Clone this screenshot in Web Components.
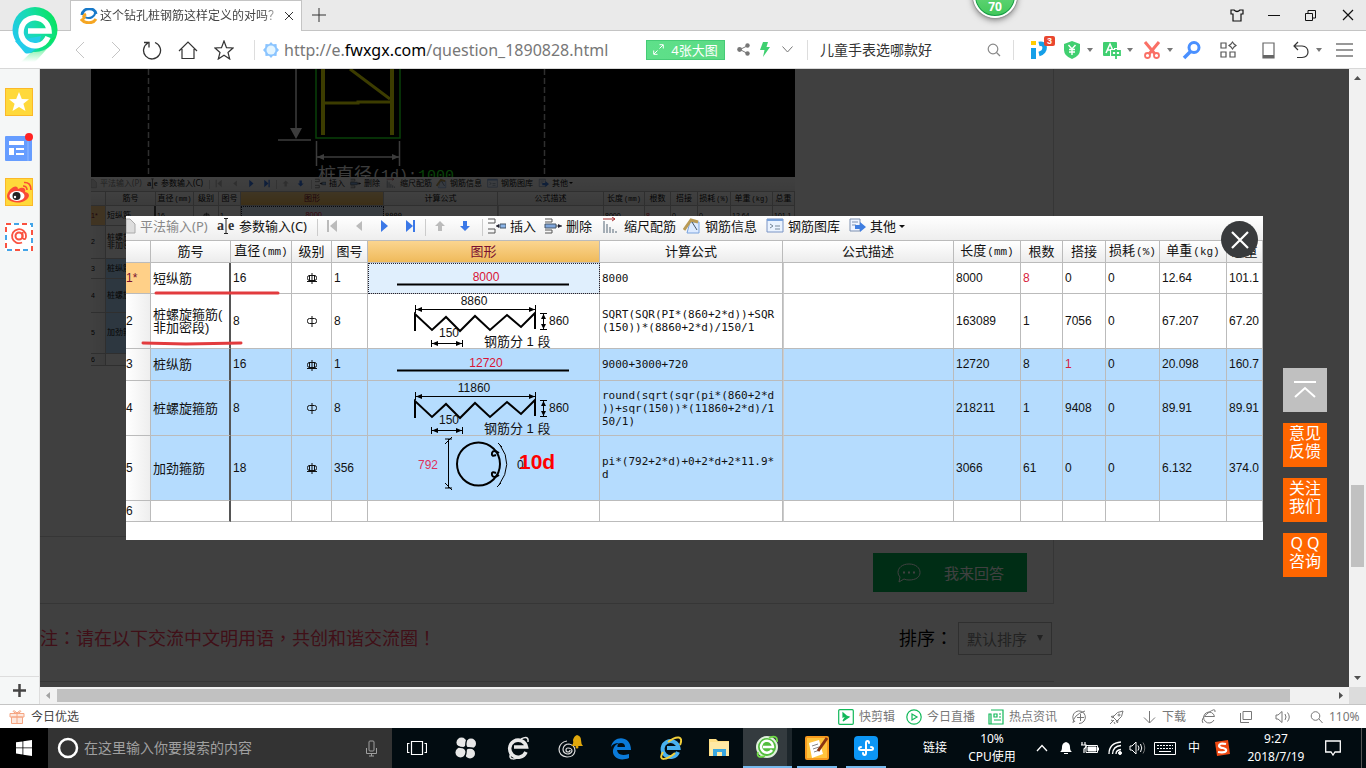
<!DOCTYPE html>
<html lang="zh-CN">
<head>
<meta charset="utf-8">
<title>这个钻孔桩钢筋这样定义的对吗</title>
<style>
html,body{margin:0;height:100%}
body{font:12px/16px "Noto Sans","Noto Sans CJK SC",sans-serif;color:#333;overflow:hidden}
</style>
</head>
<body>
<browser-window></browser-window>
<script>
const define=(name,css,html)=>customElements.define(name,class extends HTMLElement{
  constructor(){
    super();
    const t=document.createElement('template');
    t.innerHTML=`<style>*{box-sizing:border-box}button{font:inherit;color:inherit;background:none;border:0;padding:0;margin:0;display:flex;align-items:center;justify-content:center;white-space:nowrap}svg{display:block;flex:none}input{font:inherit;color:inherit;border:0;background:none;padding:0;margin:0;min-width:0;outline:0}${css}</style>${typeof html==='function'?html(this):html}`;
    this.attachShadow({mode:'open'}).append(t.content.cloneNode(true));
  }
});
const svg=(w,h,body,attr='fill="none" stroke="currentColor"',vb)=>`<svg width="${w}" height="${h}" viewBox="${vb||`0 0 ${w} ${h}`}" ${attr} aria-hidden="true">${body}</svg>`;

define('tab-strip',`
:host{display:flex;height:31px;background:#eaeaea;border-bottom:1px solid #c4c4c4;padding-left:70px;position:relative;z-index:1}
.tab{display:flex;align-items:center;width:232px;height:31px;background:#fff;border:1px solid #c4c4c4;border-bottom:0;padding:0 7px 0 9px}
.name{flex:1;margin:0 6px 0 2px;white-space:nowrap;overflow:hidden;color:#444;-webkit-mask:linear-gradient(90deg,#000 164px,transparent 182px)}
.plus{width:33px}
.win{display:flex;margin-left:auto}
.win button{width:37px;color:#111}
.ball{position:absolute;left:973px;top:-26px;width:44px;height:44px;border-radius:50%;background:linear-gradient(#7ee08c,#41c85a);border:2px solid #fff;box-shadow:0 0 0 1px #999,0 2px 6px #777,inset 0 0 0 1px #189a4a;color:#fff;font-weight:700;line-height:14px;display:flex;align-items:flex-end;justify-content:center;padding-bottom:2px}
.logo{position:absolute;left:11px;top:6px}
`,`
<span class="logo">${svg(48,57,`<defs><linearGradient id="a" x1="0" y1=".7" x2="1" y2=".3"><stop offset="0" stop-color="#22c8ef"/><stop offset=".5" stop-color="#17dcae"/><stop offset="1" stop-color="#06e45c"/></linearGradient><linearGradient id="b" x1="0" y1="0" x2="0" y2="1"><stop offset="0" stop-color="#07e45d"/><stop offset="1" stop-color="#07e45d" stop-opacity="0"/></linearGradient></defs><circle cx="24" cy="23.500" r="22.500" fill="url(#a)"/><path d="M4 35L14 47Q18 49 26 44L30 30Z" fill="#23cdea"/><path d="M45 30Q42 37 24 56H10Q20 46 30 38Z" fill="url(#b)"/><path d="M37 31A14 14 0 1 1 38 25H17" fill="none" stroke="#fff" stroke-width="5.500"/>`,'')}</span>
<div class="tab">
${svg(18,16,`<path d="M2 7C3-1 15-1 16 6" stroke="#1879c9" stroke-width="3"/><path d="M5 9C10 12 15 8 15 5" stroke="#1879c9" stroke-width="2"/><path d="M1 11C5 16 13 16 16 11M5 11Q2 8 6 6" stroke="#f5a623" stroke-width="3"/>`)}
<span class="name">这个钻孔桩钢筋这样定义的对吗？</span>
<button aria-label="关闭标签页">${svg(10,10,'<path d="M1 1L9 9M9 1L1 9"/>')}</button></div>
<button class="plus" aria-label="新建标签页">${svg(14,14,'<path d="M7 0V14M0 7H14"/>')}</button>
<div class="win">
<button aria-label="皮肤">${svg(14,13,'<path d="M4 1H1V5H3V12H11V5H13V1H10Q7 4 4 1Z" stroke-width="1.200"/>')}</button>
<button aria-label="最小化">${svg(12,12,'<path d="M0 6.500H12"/>')}</button>
<button aria-label="还原">${svg(11,11,'<path d="M.5 3.500H7.500V10.500H.5ZM3 3V.5H10.500V8H8"/>')}</button>
<button aria-label="关闭">${svg(12,12,'<path d="M1 1L11 11M11 1L1 11" stroke-width="1.200"/>')}</button></div>
<div class="ball">70</div>`);

const caret=svg(6,4,'<path d="M0 0H6L3 4Z" fill="#777"/>','');
define('tool-bar',`
:host{display:flex;align-items:center;height:38px;background:#fff;border-bottom:1px solid #d8d8d8;padding-left:62px}
.nav{display:flex;color:#333}.nav button{width:36px;height:36px}.off{color:#c4c4c4}
i{width:1px;height:20px;background:#ddd}
.addr{flex:1;display:flex;align-items:center;margin:0 0 0 12px;min-width:0}
.addr svg{margin:0 5px 0 8px}
.url{flex:1;font-size:16px;line-height:22px;color:#777;white-space:nowrap;overflow:hidden;text-decoration:none}.url b{font-weight:400;color:#000}
.pics{width:79px;height:20px;background:linear-gradient(90deg,#5ee08a,#5cdb85);border:1px solid #45cb76;color:#fff;font-size:13px;gap:7px;margin-right:7px}
.acts{display:flex;margin-right:9px}.acts button{width:22px;color:#777}
.find{display:flex;align-items:center;width:205px;padding:0 12px 0 12px;font-size:14px}.find input{flex:1}
.tools{display:grid;grid-template-columns:35px 40px 40px 40px 36px 40px 34px 44px 30px;padding-left:13px}
.tools button{justify-content:flex-start;gap:5px;position:relative;height:30px}
.n{position:absolute;left:17px;top:1px;width:11px;height:10px;background:#e9472f;border-radius:2px;color:#fff;font:700 9px/10px "Liberation Sans",sans-serif}
`,`
<div class="nav">
<button class="off" aria-label="后退">${svg(10,18,'<path d="M9 1L1 9L9 17"/>')}</button>
<button class="off" aria-label="前进">${svg(10,18,'<path d="M1 1L9 9L1 17"/>')}</button>
<button aria-label="刷新">${svg(20,20,'<path d="M6 3A8.500 8.500 0 1 0 13 2.500M2 2.500H7V7.500" stroke-width="1.300"/>')}</button>
<button aria-label="主页">${svg(20,20,'<path d="M1 11L10 2L19 11M4 9V18.500H16V9" stroke-width="1.200"/>')}</button>
<button aria-label="收藏">${svg(20,20,'<path d="M10 1L12.500 7.700L19 8L14 12.500L15.700 19L10 15.300L4.300 19L6 12.500L1 8L7.500 7.700Z" stroke-width="1.200"/>')}</button></div>
<div class="addr"><i></i>
${svg(16,16,'<path d="M8 0L10 2.200L13.500 2L13.800 5.500L16 8L13.800 10.500L13.500 14L10 13.800L8 16L6 13.800L2.500 14L2.200 10.500L0 8L2.200 5.500L2.500 2L6 2.200Z" fill="#8ac4ff"/><circle cx="8" cy="8" r="4.500" fill="#e4f5ff"/>','')}
<a class="url" href="http://e.fwxgx.com/question_1890828.html">http://e.<b>fwxgx.com</b>/question_1890828.html</a></div>
<button class="pics">${svg(11,11,'<path d="M6.500 .7H10.300V4.500M10 1L6.500 4.500M.7 6.500V10.300H4.500M1 10L4.500 6.500"/>')}4张大图</button>
<div class="acts">
<button aria-label="分享">${svg(13,13,'<path d="M11 2.500L3 6.500L10.500 10.500" stroke="#777"/><g fill="#777"><circle cx="10.500" cy="2.500" r="2.200"/><circle cx="2.600" cy="6.500" r="2.400"/><circle cx="10.500" cy="10.500" r="2.200"/></g>','fill="none"')}</button>
<button aria-label="极速模式">${svg(10,15,'<path d="M3 0H8L6.500 5H10L3 15L4.500 8H0Z" fill="#3fd070"/>','')}</button>
<button aria-label="更多">${svg(11,7,'<path d="M.5 .5L5.500 6L10.500 .5"/>')}</button></div>
<i></i>
<label class="find"><input aria-label="搜索" value="儿童手表选哪款好">${svg(14,14,'<circle cx="6" cy="6" r="4.800"/><path d="M9.500 9.500L13 13"/>','fill="none" stroke="#888" stroke-width="1.200"')}</label>
<i></i>
<div class="tools">
<button aria-label="比价">${svg(24,20,'<rect x="4" y="1" width="5" height="4" fill="#fc0"/><path d="M4 8H9V19H4Z" fill="#159fe8"/><path d="M12 4C19 2 20 12 12 14" fill="none" stroke="#159fe8" stroke-width="4.500"/>','')}<span class="n">3</span></button>
<button aria-label="网购先赔">${svg(20,20,'<path d="M10 1L18 4V10Q18 16 10 19Q2 16 2 10V4Z" fill="#40cf70"/><path d="M6.500 5L10 9L13.500 5M10 9V15M7 9.500H13M7 12H13" stroke="#fff" stroke-width="1.400" fill="none"/>','')}${caret}</button>
<button aria-label="翻译">${svg(20,20,'<rect x="1" y="2" width="14" height="14" rx="1" fill="#40cf70"/><path d="M4 13L8 4L12 13M5.500 10H10" stroke="#fff" stroke-width="1.500" fill="none"/><path d="M14 8V19M10 11H18V15H10Z" stroke="#fff" stroke-width="4" fill="none"/><path d="M14 9V19M10 11H18V15H10Z" stroke="#40cf70" stroke-width="1.800" fill="none"/>','')}${caret}</button>
<button aria-label="截图">${svg(20,20,'<path d="M3 2L13 14M17 2L7 14" stroke-width="3"/><circle cx="5.500" cy="15.500" r="2.500" stroke-width="1.800"/><circle cx="14.500" cy="15.500" r="2.500" stroke-width="1.800"/>','fill="none" stroke="#fa7066"')}${caret}</button>
<button aria-label="登录管家">${svg(20,20,'<circle cx="12" cy="7.500" r="5" stroke-width="3"/><path d="M8.500 11.500L2 18" stroke-width="3.500"/>','fill="none" stroke="#4a90ff"')}</button>
<button aria-label="扩展">${svg(20,20,'<path d="M3 3H8V8H3ZM3 12H8V17H3ZM12 12H17V17H12ZM14.500 2L16 4L18 5.500L16 7L14.500 9L13 7L11 5.500L13 4Z"/>','fill="none" stroke="#555" stroke-width="1.200"')}</button>
<button aria-label="手机">${svg(20,20,'<path d="M5 3H16V18H5Z"/><path d="M5 16.500H16" stroke-width="3"/>','fill="none" stroke="#666" stroke-width="1.200"')}</button>
<button aria-label="恢复">${svg(19,20,'<path d="M6 2L2 6L6 10M2 6H10Q16 6.500 16 12Q16 17 10 17.500H5" stroke-width="1.200"/>')}${caret}</button>
<button aria-label="菜单">${svg(17,14,'<path d="M0 1H17M0 7H17M0 13H17" stroke="#333" stroke-width="1.200"/>')}</button></div>`);

define('side-rail',`
:host{display:flex;flex-direction:column;width:40px;background:#f5f7f7;border-right:1px solid #ddd;padding-top:19px}
.i{display:flex;flex-direction:column;gap:17px;padding-left:5px}.i button{width:28px;height:28px}
.add{margin-top:auto;height:28px;border-top:1px solid #ddd;color:#444}
`,`<div class="i">
<button aria-label="收藏夹">${svg(28,28,'<rect x=".5" y=".5" width="27" height="27" fill="#ffd93b" stroke="#fbb829"/><path d="M14 4L16.800 11L24 11.300L18.400 15.800L20.500 23L14 19L7.500 23L9.600 15.800L4 11.300L11.200 11Z" fill="#fff"/>','')}</button>
<button aria-label="资讯">${svg(30,28,'<rect x="1" y="3" width="27" height="25" rx="1" fill="#669dff"/><path d="M24 3V28" stroke="#8eb8ff"/><g fill="#fff"><path d="M5 8H20V12H5ZM5 15H10V22H5ZM12 15H20V17H12ZM12 20H20V22H12Z"/></g><circle cx="25" cy="4" r="4" fill="#ff2323"/>','')}</button>
<button aria-label="微博">${svg(28,28,'<rect x=".5" y=".5" width="27" height="27" fill="#ffd93b" stroke="#fbb829"/><path d="M2 18C3 11 12 5 13 11C19 8 21 11 20 14C29 16 21 25 12 24.500C6 24 2 22 2 18Z" fill="#fa4b36"/><ellipse cx="12" cy="18" rx="7.500" ry="5" fill="#fff"/><circle cx="11.500" cy="18" r="4" fill="#222"/><circle cx="10" cy="19" r="1.200" fill="#fff"/><path d="M18 8Q22 8 22 12M19 4.500Q26 4 26 12" stroke="#fa4b36" stroke-width="1.600" fill="none"/>','')}</button>
<button aria-label="邮箱">${svg(28,28,'<rect width="28" height="28" fill="#fff"/><rect x="1" y="1" width="26" height="26" fill="none" stroke="#fa5240" stroke-width="2" stroke-dasharray="5 11"/><rect x="1" y="1" width="26" height="26" fill="none" stroke="#44a5e8" stroke-width="2" stroke-dasharray="5 11" stroke-dashoffset="8"/><circle cx="14" cy="13" r="3.500" fill="none" stroke="#fa5240" stroke-width="2"/><path d="M17.500 9V15Q21 18 21 13A7 7 0 1 0 17 19.500" fill="none" stroke="#fa5240" stroke-width="1.800"/>','')}</button></div>
<button class="add" aria-label="添加">${svg(13,13,'<path d="M6.500 0V13M0 6.500H13" stroke-width="2.500"/>')}</button>`);

define('cad-drawing',`:host{display:block;background:#000;height:108px;overflow:hidden}text{font:15px "Liberation Mono","Noto Sans CJK SC",monospace}.z{font-size:18px}`,
svg(704,108,`<g stroke="#ccc"><path d="M57.500 0V108M453.500 0V108" stroke-dasharray="6 3" stroke-width="1.500" stroke="#bbb"/><path d="M205 0V60M187 71H220M225.500 72V97M308.500 72V97M226 88H308" stroke="#eee" stroke-width="1.500"/></g><path d="M199 59H211L205 70ZM226 88L233 85V91ZM308 88L301 85V91Z" fill="#eee"/><g stroke="#ee0" stroke-width="4"><path d="M232 0V66M301 0V66" /><path d="M259 0L299 30M234 34H267V33H299" stroke-width="3"/></g><path d="M225 0V69H309V0" stroke="#2f2" stroke-width="1.500"/><text class="z" x="227" y="112" fill="#eee">桩直径</text><text x="281" y="111" fill="#eee">(1d):</text><text x="327" y="111" fill="#2f2">1000</text>`,'fill="none"'));

/* 钢筋表 */
const T='font-family="Liberation Sans,Noto Sans CJK SC,sans-serif" font-size="12" fill="#111"';
const bar=(n,h)=>`<svg class="g" viewBox="0 0 176 ${h}"><text x="90" y="18" text-anchor="middle" ${T} style="fill:#d81536">${n}</text><path d="M1 21.500H173" stroke="#000" stroke-width="2"/></svg>`;
const spiral=n=>`<svg class="g" viewBox="0 0 176 55" fill="none" stroke="#000"><path d="M19 37V20L36 36L50 23L64 37L79 22L94 36L111 21L125 33L139 19V35" stroke-width="2"/><path d="M20 15.500H139M19.500 11V19M139.500 11V19M35 49.500H66M35.500 46V53M66.500 46V53M147.500 20V35M144 19.500H151M144 35.500H151"/><path d="M20 15.500L26 13V18ZM139 15.500L133 13V18ZM36 49.500L42 47V52ZM66 49.500L60 47V52ZM147.500 20L145 25H150ZM147.500 35L145 30H150Z" fill="#000" stroke="none"/><g stroke="none" ${T}><text x="78" y="11" text-anchor="middle">${n}</text><text x="43" y="43">150</text><text x="153" y="31">860</text><text x="88" y="52" font-size="13">钢筋分 1 段</text></g></svg>`;
const ring=`<svg class="g" viewBox="0 0 176 65" fill="none" stroke="#000"><circle cx="82.500" cy="28" r="21.500" stroke-width="2"/><path d="M52.500 3V52M49 3H56M49 8L56 1M49 52H56M49 47L56 54M102 7L106 11M101 51L105 47"/><path d="M104 9Q118 28 103 49" /><path d="M103 17Q97 13 96 17T100 19M103 39Q97 43 96 39T100 37" stroke-width="2"/><text x="22" y="33" ${T} stroke="none" style="fill:#e0305c">792</text><text x="121" y="33" ${T} stroke="none">0</text><text x="123" y="33" font-family="Liberation Sans,sans-serif" font-weight="700" font-size="21" fill="#f00" stroke="none">10d</text></svg>`;
const lv=two=>`<svg class="lv" viewBox="0 0 12 12" fill="none" stroke="#111" role="img" aria-label="钢筋级别"><path d="M6 1V12"/><rect x="1.500" y="3.500" width="9" height="5" rx="2"/>${two?'<path d="M3.500 3V9M8.500 3V9M1 9.500H11"/>':''}</svg>`;
const heads=['','筋号','直径<s>(mm)</s>','级别','图号','图形','计算公式','公式描述','长度<s>(mm)</s>','根数','搭接','损耗<s>(%)</s>','单重<s>(kg)</s>','总重'];
const rows=[
['1*','短纵筋','16',lv(1),'1',bar(8000,31),'8000','','8000','<em>8</em>','0','0','12.64','101.1'],
['2','桩螺旋箍筋(<br>非加密段)','8',lv(0),'8',spiral(8860),'SQRT(SQR(PI*(860+2*d))+SQR<br>(150))*(8860+2*d)/150/1','','163089','1','7056','0','67.207','67.20'],
['3','桩纵筋','16',lv(1),'1',bar(12720,32),'9000+3000+720','','12720','8','<em>1</em>','0','20.098','160.7'],
['4','桩螺旋箍筋','8',lv(0),'8',spiral(11860),'round(sqrt(sqr(pi*(860+2*d<br>))+sqr(150))*(11860+2*d)/1<br>50/1)','','218211','1','9408','0','89.91','89.91'],
['5','加劲箍筋','18',lv(1),'356',ring,'pi*(792+2*d)+0+2*d+2*11.9*<br>d','','3066','61','0','0','6.132','374.0'],
['6','','','','','','','','','','','','','']];
const ti=(b,vb='0 0 18 18')=>`<svg class="ti" viewBox="${vb}" fill="none">${b}</svg>`;
const blue='#3b78e7',grey='#bbb';
const tools=[
['平法输入(P)','<svg class="ti half" viewBox="0 0 10 18"><path d="M0 2H4L9 7V16H0Z" fill="#ddd" stroke="#aaa"/></svg>','dis'],
['参数输入(C)',ti('<text x="0" y="13" font-family="Liberation Serif" font-weight="700" font-size="14" fill="#333">a</text><text x="11" y="13" font-family="Liberation Serif" font-weight="700" font-size="14" fill="#333">e</text><path d="M9 2V16M7 1.500H11M7 16.500H11" stroke="#222"/>')],
'|',
['',ti(`<path d="M2 3V15" stroke="${grey}" stroke-width="2"/><path d="M11 3V15L4 9Z" fill="${grey}"/>`),'','第一条'],
['',ti(`<path d="M8 4V14L2 9Z" fill="${grey}"/>`),'','上一条'],
['',ti(`<path d="M2 3V15L9 9Z" fill="${blue}"/>`),'','下一条'],
['',ti(`<path d="M2 3V15L9 9Z" fill="${blue}"/><path d="M10 3V15" stroke="${blue}" stroke-width="2"/>`),'','最后一条'],
'|',
['',ti(`<path d="M6 4L11 9H8V14H4V9H1Z" fill="${grey}"/>`),'','上移'],
['',ti(`<path d="M6 14L11 9H8V4H4V9H1Z" fill="${blue}"/>`),'','下移'],
'|',
['插入',ti('<path d="M0 2H7V6H0M0 12H7V16H0M8 9H12" stroke="#555"/><path d="M12 7H18V11H12Z" fill="#8ab4e8" stroke="#456"/><path d="M8 9L11 7V11Z" fill="#223"/>')],
['删除',ti('<path d="M1 2H8V5H1M1 13H8V16H1M11 9H18" stroke="#555"/><path d="M1 7H12V11H1Z" fill="#7fa6dc" stroke="#456"/><path d="M18 9L14 7V11Z" fill="#223"/>')],
['缩尺配筋',ti('<path d="M1 2H13M10 0L13 2L10 4" stroke="#a33"/><path d="M2 4V16M5 7V16M8 10V16M11 12V16M14 14V16" stroke="#567"/>')],
['钢筋信息',ti('<path d="M7 5H16V16H4Z" fill="#dceaff" stroke="#7aa3dc"/><path d="M1 13L8 3L15 5" stroke="#b99a55" stroke-width="3"/><path d="M9 5L14 13" stroke="#456"/>')],
['钢筋图库',ti('<path d="M1 2H17V15H1Z" fill="#eaf3ff" stroke="#7a94c4"/><path d="M1 3H17" stroke="#7aa3dc" stroke-width="2"/><path d="M4 7L7 9L4 11M9 9H14M9 12H14" stroke="#789"/>')],
['其他<u></u>',ti('<path d="M2 2H12V14H2Z" fill="#eef4ff" stroke="#7d90b0"/><path d="M4 5H10M4 8H8" stroke="#7d90b0"/><path d="M7 8H12V5L18 10L12 15V12H7Z" fill="#3f7de0"/>')]];
define('rebar-sheet',`
:host{display:block;background:#fff;overflow:hidden;color:#111;--fs:13px;--num:12px;--mono:11px;--lh:13px;--pad:2px;--ic:18px;--gap:4px;--g:176px;--lv:12px}
:host([compact]){--fs:8px;--num:7px;--mono:7px;--lh:8px;--pad:1px;--ic:11px;--gap:3px;--g:109px;--lv:7px}
.bar{display:grid;grid-template-columns:91px 100px 9px 28px 25px 25px 21px 9px 25px 23px 6px 56px 58px 81px 83px 82px 1fr;height:25px;padding-bottom:4px;background:linear-gradient(#fff,#eee);border-bottom:1px solid #bbb;font-size:var(--fs)}
:host([compact]) .bar{grid-template-columns:56px 62px 6px 17px 16px 15px 13px 6px 15px 14px 4px 35px 36px 50px 51px 51px 1fr;height:15px;padding-bottom:2px}
.bar button{justify-content:flex-start;gap:var(--gap);height:100%;line-height:var(--lh)}
.bar i{width:1px;background:#ccc;margin:3px 0 0}.dis{color:#888}
.ti{width:var(--ic);height:var(--ic)}.half{width:10px}:host([compact]) .half{width:6px}
u{display:inline-block;border:3px solid transparent;border-top-color:#111;border-bottom:0;margin:0 0 3px 3px}:host([compact]) u{border-width:2px 2px 0;margin:0 0 2px 1px}
table{table-layout:fixed;width:100%;border-collapse:separate;border-spacing:0;font:var(--num)/var(--lh) "Liberation Sans","Noto Sans CJK SC",sans-serif}
th,td{padding:0 0 0 var(--pad);border:solid #bbb;border-width:0 1px 1px 0;text-align:left;white-space:nowrap;overflow:hidden;font-weight:400}
thead th{background:linear-gradient(#fff,#ececec);text-align:center;font-size:var(--fs);padding:0}
s,.f{font-family:"DejaVu Sans Mono",monospace;font-size:var(--mono)}
s{text-decoration:none;font-family:"Liberation Mono",monospace;margin-left:1px}
tbody th{background:linear-gradient(90deg,#fff,#eee);padding:0}
tbody tr:first-child th{background:#ffd088;color:#7a1030}
.n{font-size:var(--fs);border-right:2px solid #555}.c{text-align:center;padding:0}.lv{width:var(--lv);height:var(--lv);margin:0 auto}
.g{width:var(--g);margin:0 auto -1px}
.d{border-left:1px solid #ccc}
.blue td{background:#b5dcfe}
thead .sel{background:linear-gradient(#fbd58f,#efba5b);color:#7a1030}
tr:first-child td.sel{background:#e0effd;box-shadow:none;outline:1px dotted #223;outline-offset:-1px}
em{font-style:normal;color:#d8203c}
.foot{height:18px}:host([compact]) .foot{height:1px}
`,el=>{
const k=el.hasAttribute('compact');
const w=k?[15,50,38,25,22,143,114,106,41,26,27,33,42,22]:[25,80,61,40,36,232,183,171,67,42,43,54,67,36];
const h=k?[14,20,33,20,34,41,12]:[22,31,55,32,55,65,21];
const cls=['','n','','c','','c sel','f','d'];
/* the compact sheet is a thumbnail: beyond the first record it lists only numbers and names */
const shown=(i,j)=>!k||i<1||j<2;
return `<div class="bar">${tools.map(t=>t==='|'?'<i></i>':`<button class="${t[2]||''}" ${t[3]?`aria-label="${t[3]}"`:''}>${t[1]}${t[0]?`<span>${t[0]}</span>`:''}</button>`).join('')}</div>
<table><colgroup>${w.map(x=>`<col style="width:${x}px">`).join('')}</colgroup>
<thead><tr style="height:${h[0]}px">${heads.map((x,i)=>`<th class="${i==5?'sel':''}">${x}</th>`).join('')}</tr></thead>
<tbody>${rows.map((r,i)=>`<tr style="height:${h[i+1]}px" class="${i>1&&i<5?'blue':''}">${r.map((x,j)=>j?`<td class="${cls[j]||''}">${shown(i,j)?x:''}</td>`:`<th scope="row">${x}</th>`).join('')}</tr>`).join('')}</tbody></table><div class="foot"></div>`;});

define('answer-page',`
:host{display:block;width:1014px;background:#fff}
.panel{border-right:1px solid #d8d8d8}
figure{margin:0;padding-left:51px;width:755px;height:467px}
.reply{border:solid #d8d8d8;border-width:1px 0;height:68px;display:flex;align-items:flex-start;justify-content:flex-end;padding:16px 26px 0 0}
.reply button{width:154px;height:39px;background:#00b455;color:#fff;font-size:15px;gap:22px}
.note{display:flex;align-items:center;height:78px;border-bottom:1px solid #d8d8d8;font-size:18px;line-height:24px;font-family:"Noto Sans CJK TC",sans-serif;padding:0 2px 8px 0}
p{margin:0;padding-bottom:4px;color:#ff4060;flex:1}
label{display:flex;align-items:center;color:#000;gap:5px}label>span:first-child{padding-bottom:4px}
.s{position:relative;display:block}
select{display:block;appearance:none;width:94px;height:33px;border:1px solid #bbb;background:#fff;color:#888;font:15px "Noto Sans CJK SC",sans-serif;padding:0 0 0 8px;border-radius:0}
.s::after{content:"";position:absolute;right:9px;top:13px;border:3px solid transparent;border-top:6px solid #888;border-bottom:0}
`,`<div class="panel"><figure><cad-drawing></cad-drawing><rebar-sheet compact></rebar-sheet></figure>
<div class="reply"><button>${svg(26,20,'<path d="M13 1C20 1 24 5 24 9.500S20 17 13 17Q10 17 8 16L3 19L4 14Q2 12 2 9.500C2 5 6 1 13 1Z"/><path d="M7 9.500H9M12 9.500H14M17 9.500H19" stroke-width="2"/>')}<span>我来回答</span></button></div></div>
<div class="note" lang="zh-TW"><p>注：请在以下交流中文明用语，共创和谐交流圈！</p><label><span>排序：</span><span class="s" lang="zh-CN"><select><option>默认排序</option></select></span></label></div>`);

define('image-lightbox',`
:host{position:absolute;inset:0;background:rgba(0,0,0,.75);display:flex;align-items:center;padding:0 86px}
.box{position:relative;flex:1;min-width:0}
.close{position:absolute;right:5px;top:5px;width:37px;height:37px;border-radius:50%;background:#393b3d;color:#fff}
.marks{position:absolute;left:0;top:0;pointer-events:none}
`,`<div class="box"><slot></slot>
<svg class="marks" width="200" height="140" fill="none" stroke="#e23b3e" stroke-width="3" stroke-linecap="round" aria-hidden="true"><path d="M30 77H152M17 127L60 128L115 127"/></svg>
<button class="close" aria-label="关闭图片">${svg(18,18,'<path d="M1 1L17 17M17 1L1 17" stroke-width="2.200"/>')}</button></div>`);

define('float-menu',`
:host{position:absolute;right:22px;top:299px;display:grid;gap:11px}
button{width:44px;height:44px;background:#f60;color:#fff;font-size:16px;line-height:18px;white-space:normal}
.top{background:#c0c0c0}span{display:block;width:34px;padding-bottom:6px}
`,`<button class="top" aria-label="回到顶部">${svg(24,20,'<path d="M1 2H23M2 17L12 8L22 17" stroke-width="2"/>')}</button>
<button><span>意见反馈</span></button><button><span>关注我们</span></button><button><span>Q Q<br>咨询</span></button>`);

define('web-viewport',`
:host{flex:1;min-width:0;display:grid;grid-template:minmax(0,1fr) 17px/minmax(0,1fr) 17px}
.view{position:relative;overflow:hidden;background:#fff}
.v,.h{background:#f1f1f1;display:flex;align-items:center;color:#505050}
.v{flex-direction:column}
.v .t{width:13px;flex:82;background:#c1c1c1}.v .a{flex:399}.v .b{flex:103}
.h .t{height:13px;flex:1233;background:#c1c1c1}.h .b{flex:42}
.v svg,.h svg{width:17px;height:17px}.k{background:#dcdcdc}
`,`<div class="view"><answer-page></answer-page><image-lightbox><rebar-sheet></rebar-sheet></image-lightbox><float-menu></float-menu></div>
<div class="v">${svg(17,17,'<path d="M5 11H12L8.500 7Z" fill="#505050"/>','')}<span class="a"></span><span class="t"></span><span class="b"></span>${svg(17,17,'<path d="M5 6H12L8.500 10Z" fill="#505050"/>','')}</div>
<div class="h">${svg(17,17,'<path d="M10 5V12L6 8.500Z" fill="#a3a3a3"/>','')}<span class="t"></span><span class="b"></span>${svg(17,17,'<path d="M7 5V12L11 8.500Z" fill="#505050"/>','')}</div><div class="k"></div>`);

define('status-strip',`
:host{display:flex;height:24px;background:#fff;border-top:1px solid #c4c4c4;color:#777}
button{justify-content:flex-start;gap:5px}
.gift{color:#444;padding-left:9px;gap:6px}
.r{margin-left:auto;display:grid;grid-template-columns:68px 82px 84px 37px 33px 59px 37px 36px 35px 57px}
`,`<button class="gift">${svg(16,16,'<path d="M1 4.500H15V8H1ZM2.500 8H13.500V14.500H2.500ZM8 4V14.500M8 4C2 4 4-1 8 4C12-1 14 4 8 4" fill="#fde9df"/>','stroke="#f5a582"')}今日优选</button>
<div class="r">
<button>${svg(16,16,'<rect x=".7" y=".7" width="14.600" height="14.600" rx="1"/><path d="M5 4L8 6.500L5 8ZM5 12L11 8L8 7Z" fill="#12b85a"/>','fill="none" stroke="#12b85a" stroke-width="1.200"')}快剪辑</button>
<button>${svg(16,16,'<circle cx="8" cy="8" r="7.200"/><path d="M6 5V11L11 8Z"/>','fill="none" stroke="#12b85a" stroke-width="1.200"')}今日直播</button>
<button>${svg(16,16,'<path d="M3 1H15V15H1V5H3V15M6 5H9V8H6ZM11 5H13M11 8H13M6 11H13"/>','fill="none" stroke="#12b85a" stroke-width="1.200"')}热点资讯</button>
<button aria-label="加速">${svg(16,16,'<path d="M3 13A6.300 6.300 0 1 1 7 14.500M1 14Q1 6 13 2M5 8.500H12M8.500 5V12"/>')}</button>
<button aria-label="火箭">${svg(16,16,'<path d="M14 2Q8 2 4 8L8 12Q14 8 14 2ZM5 7L2 7.500L4 9M9 11L8.500 14L7 12M5 11L1 15M2 11L4 12M5 13L6 15"/><circle cx="10" cy="6" r="1"/>')}</button>
<button>${svg(15,16,'<path d="M7.500 2V14M2 8.500L7.500 14L13 8.500"/>')}下载</button>
<button aria-label="内核">${svg(16,16,'<path d="M13 11A5.500 5.500 0 1 1 13.500 7.500H4M2 14Q-1 10 7 4T14 3"/>')}</button>
<button aria-label="分屏">${svg(16,16,'<path d="M5 2.500H13.500V10.500H5ZM2.500 4V13.500H11"/>')}</button>
<button aria-label="声音">${svg(18,16,'<path d="M2 6H4L8 2.500V13.500L4 10H2ZM11 5Q13 8 11 11M13.500 3.500Q17 8 13.500 12.500"/>')}</button>
<button>${svg(15,16,'<circle cx="6.500" cy="7" r="4.300"/><path d="M10 10L13.500 14"/>')}110%</button></div>`);

const app=(b)=>svg(24,24,b,'fill="none"');
define('task-bar',`
:host{display:flex;height:40px;background:#020c11;color:#fff}
.start{width:48px;background:#000}
.q{display:flex;align-items:center;width:344px;background:#333;padding:0 14px 0 8px;gap:4px;font-size:14px;color:#a0a0a0}.q input{flex:1}.q input::placeholder{color:#a0a0a0;opacity:1}
.apps{display:grid;grid-template-columns:49px 50px 54px 51px repeat(6,49px)}
.on{background:linear-gradient(90deg,#343b3f 44px,#1d262b 44px);border-bottom:2px solid #76b9ed;padding-right:1px}
.run{background:linear-gradient(#76b9ed,#76b9ed) center bottom/40px 2px no-repeat}
.tray{margin-left:auto;display:grid;grid-template-columns:48px 66px 34px 14px 34px 16px 28px 28px 30px 26px 82px 32px 17px}
.tray button{text-align:center;line-height:18px;white-space:normal}
.edge{border-left:1px solid #555;margin-left:12px}
`,`<button class="start" aria-label="开始">${svg(16,16,'<path d="M0 2.300L6.500 1.400V7.500H0ZM7.300 1.300L16 0V7.500H7.300ZM0 8.300H6.500V14.500L0 13.600ZM7.300 8.300H16V16L7.300 14.700Z" fill="#fff"/>','')}</button>
<label class="q">${svg(24,24,'<circle cx="12" cy="12" r="9" stroke="#fff" stroke-width="2.500"/>','fill="none"')}<input aria-label="搜索" placeholder="在这里输入你要搜索的内容">${svg(13,17,'<rect x="4" y="1" width="5" height="10" rx="1"/><path d="M1.500 8V13.500H11.500V8M6.500 13.500V16M4 16H9"/>')}</label>
<div class="apps">
<button aria-label="任务视图">${svg(20,16,'<path d="M4.500 1.500H15.500V14.500H4.500ZM2.500 3.500H.5V12.500H2.500M17.500 3.500H19.500V12.500H17.500" stroke-width="1.200"/>')}</button>
<button aria-label="应用一">${app('<g fill="#e8e8e8"><circle cx="7.500" cy="6.500" r="5"/><circle cx="17" cy="7.500" r="5"/><circle cx="16" cy="17.500" r="5"/><circle cx="6.500" cy="16.500" r="5"/></g><path d="M12 12Q6 12 2 9.500M12 12Q11 6 14 1M12 12Q18 11 22 14M12 12Q13 18 9.500 23" stroke="#020c11" stroke-width="1.300"/>')}</button>
<button aria-label="应用二">${app('<path d="M20 16A8.500 8.500 0 1 1 20.500 11H8" stroke="#e8e8e8" stroke-width="3.500"/><path d="M5 17C1 25 10 24 17 19M15 3Q23-1 22 6" stroke="#e8e8e8" stroke-width="1.500"/>')}</button>
<button aria-label="应用三">${svg(28,28,'<path d="M13 16A2 2 0 1 1 11 14Q15 14 15 17Q14 20 10 20Q6 19 6 15Q7 10 12 10Q18 11 18 17Q17 23 10 23Q2 22 2 15Q3 8 10 7" stroke="#ddd" stroke-width="1.200"/><path d="M14 12Q17 10 16 6Q17 2 20 1Q24 2 24 6Q24 10 26 12Z" fill="#e0a80c"/><circle cx="20" cy="13" r="1.500" fill="#e0a80c"/>','fill="none"')}</button>
<button aria-label="Edge">${app('<path d="M2 11C4-1 22-1 22 14H8Q9 21 20 18V22C10 26 3 21 4 14Q5 9 10 7Q4 7 2 11ZM8.500 11H16Q16 7 12 7T8.500 11Z" fill="#0a7ad9"/>')}</button>
<button aria-label="Internet Explorer">${app('<path d="M20 16A8 8 0 1 1 20.500 12H9" stroke="#49b1ef" stroke-width="4"/><path d="M5 16C-1 26 9 24 17 17M10 6C19-1 26 0 22 9" stroke="#f2cf3a" stroke-width="2"/>')}</button>
<button aria-label="文件资源管理器">${app('<path d="M2 3H9L11 5H22V20H2Z" fill="#ffdf85"/><path d="M3 6H22V20H3Z" fill="#ffe9a5"/><path d="M6 20V13H19V20H15V16H10V20Z" fill="#3aa7e0"/>')}</button>
<button class="on" aria-label="360浏览器">${app('<circle cx="12" cy="12" r="10" fill="#53bd3e" stroke="#dff0dc" stroke-width="2"/><path d="M17 15A6 6 0 1 1 18 12H8" stroke="#fff" stroke-width="2.500"/><path d="M3 17Q1 24 10 21M14 3Q23-1 22 7" stroke="#6fdc46" stroke-width="1.800"/>')}</button>
<button class="run" aria-label="笔记">${app('<rect width="24" height="24" rx="2" fill="#f79a1e"/><rect x="2" y="2" width="20" height="20" fill="#ffc43c"/><path d="M4 7L14 4L18 18L7 22Z" fill="#fff"/><path d="M7 10L13 8M8 13L14 11M9 16L15 14" stroke="#888"/><path d="M22 2L13 15" stroke="#8a3410" stroke-width="3"/>')}</button>
<button class="run" aria-label="云助手">${app('<rect width="24" height="24" rx="4" fill="#0c96f5"/><path d="M15 7Q15 5 13.500 5Q12 5 12 7V17Q12 19 10.500 19Q9 19 9 17M7 11Q5 11 5 12.500Q5 14 7 14H17Q19 14 19 12.500Q19 11 17 11" stroke="#fff" stroke-width="2" stroke-linecap="round"/>')}</button></div>
<div class="tray">
<button>链接</button><button>10%<br>CPU使用</button>
<button aria-label="显示隐藏的图标">${svg(12,8,'<path d="M1 7L6 1.500L11 7" stroke-width="1.300"/>')}</button>
<button aria-label="通知">${svg(14,14,'<path d="M1 11Q3 10 3 6Q3 2 7 1Q11 2 11 6Q11 10 13 11ZM5 12H9V13H5Z" fill="#fff"/>','')}</button>
<button aria-label="电源">${svg(18,12,'<path d="M5 3.500H16.500V10.500H5ZM17.500 5.500V8.500"/><path d="M7 5H15V9H7Z" fill="#fff"/><path d="M1 0V3M4 0V3M0 3H5V5L3 7V11" stroke-width="1.200"/>')}</button>
<button aria-label="网络">${svg(14,14,'<path d="M1 13Q1 2 13 1M4.500 13Q5 5 13 4.500M8 13Q8 9 13 8.500" stroke-width="1.300"/><circle cx="12" cy="12" r="1.500" fill="#fff"/>')}</button>
<button aria-label="音量">${svg(17,14,'<path d="M1 5H3L7 1V13L3 9H1ZM9 4.500Q11 7 9 9.500M11.500 3Q14 7 11.500 11"/><path d="M14 1.500Q17.500 7 14 12.500" stroke="#777"/>')}</button>
<button aria-label="键盘">${svg(22,13,'<path d="M.5 .5H21.500V12.500H.5Z"/><path d="M3 3.500H19M3 6.500H19" stroke-dasharray="2 1"/><path d="M5 9.500H17"/>')}</button>
<button>中</button>
<button aria-label="搜狗输入法">${svg(16,18,'<path d="M1 3L14 1L16 15L3 17Z" fill="#f04a13"/><path d="M12 5Q5 3.500 5 7Q6 9 9 9Q13 10 12 12Q11 14 4 13" stroke="#fff" stroke-width="2.200"/>','fill="none"')}</button>
<button>9:27<br>2018/7/19</button>
<button aria-label="操作中心">${svg(16,16,'<path d="M.7 1H15.300V12H10L8 15L6 12H.7Z" stroke-width="1.300"/>')}</button>
<span class="edge"></span></div>`);

define('browser-window',`:host{display:flex;flex-direction:column;height:100vh;overflow:hidden}.main{flex:1;display:flex;min-height:0}`,
`<tab-strip></tab-strip><tool-bar></tool-bar><div class="main"><side-rail></side-rail><web-viewport></web-viewport></div><status-strip></status-strip><task-bar></task-bar>`);
</script>
</body>
</html>
